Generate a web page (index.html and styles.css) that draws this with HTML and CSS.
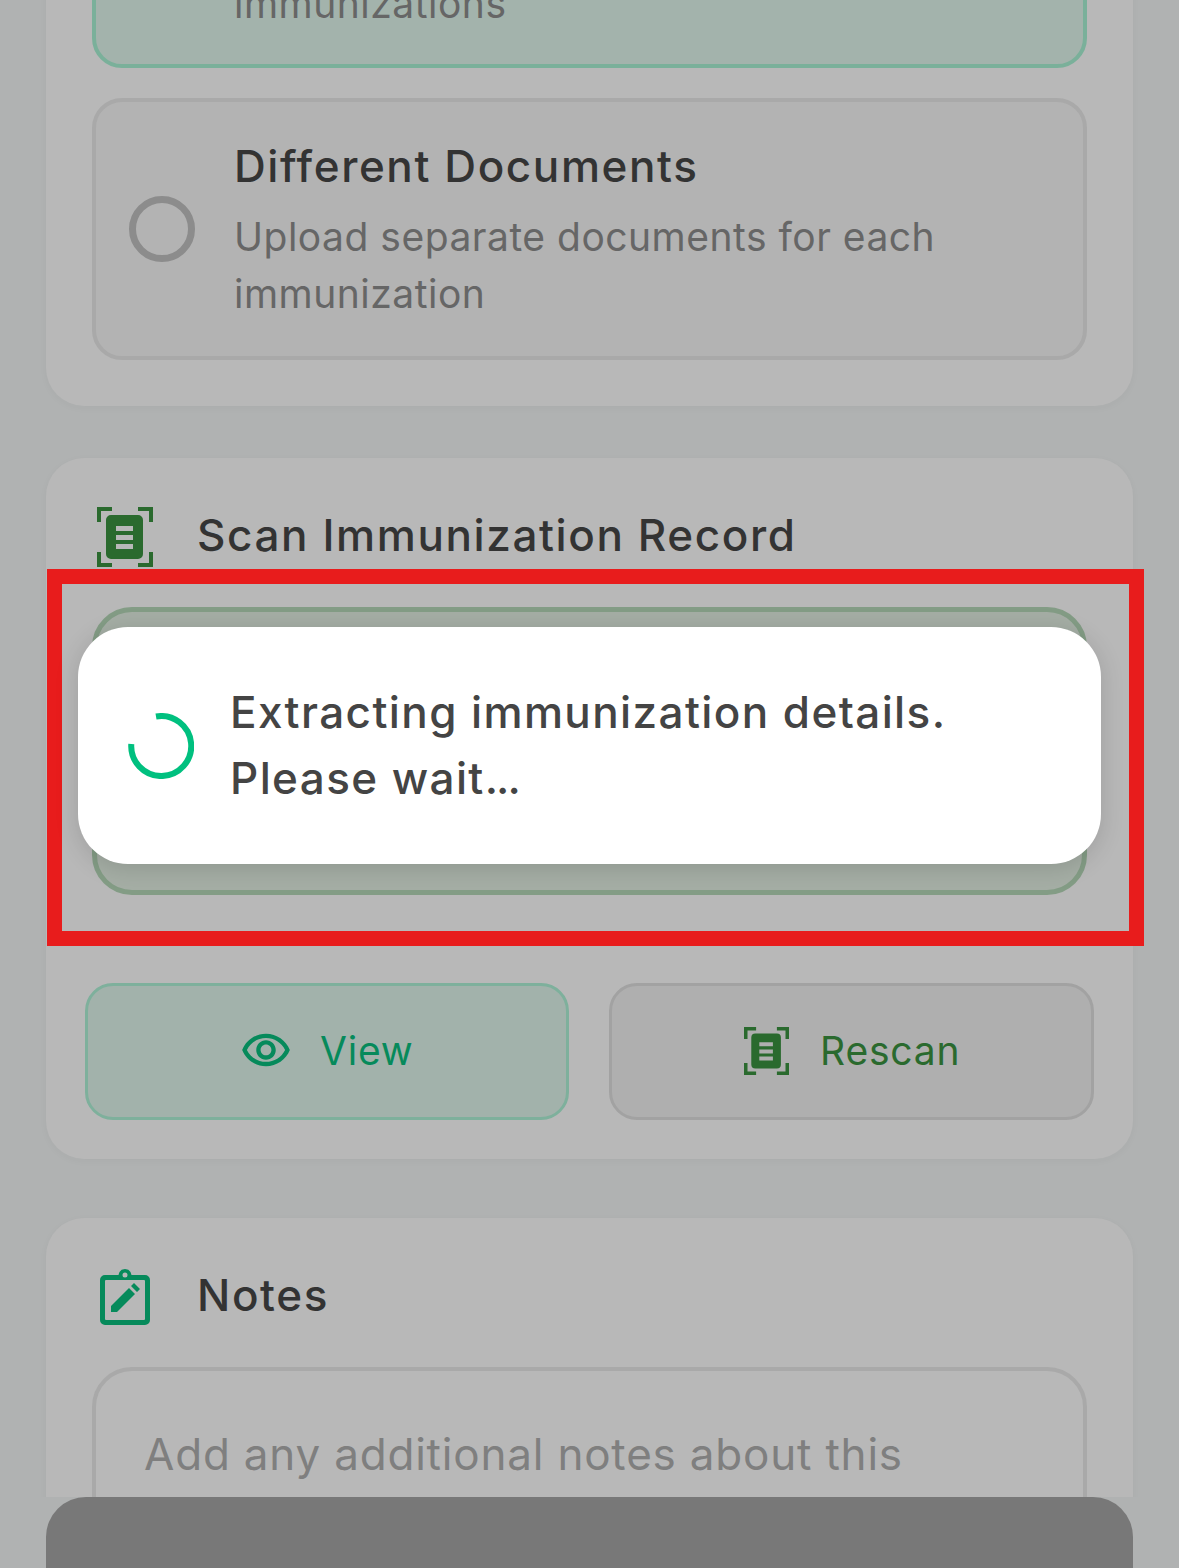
FILE: index.html
```html
<!DOCTYPE html>

<html lang="en">
<head>
    <meta charset="UTF-8">
    <meta name="viewport" content="width=device-width, initial-scale=1.0">
    <title>Scan Immunization Record</title>
    <link rel="stylesheet" href="styles.css">
</head>
<body>
    <div class="screen">
        <div class="scroller">
            <div class="scroll-content">
                <div class="card card-type">
                    <div class="option option-selected">
                        <div class="option-text">
                            <div class="option-desc">immunizations</div>
                        </div>
                    </div>
                    <div class="option">
                        <div class="radio"></div>
                        <div class="option-text">
                            <div class="option-title">Different Documents</div>
                            <div class="option-desc">Upload separate documents for each immunization</div>
                        </div>
                    </div>
                </div>

                <div class="card card-scan">
                    <div class="card-header">
                        <svg class="icon-scan" width="56" height="60" viewBox="0 0 56 60">
                            <path d="M15 2H2v13M41 2h13v13M15 58H2V45M41 58h13V45" fill="none" stroke="#2a6a2e" stroke-width="4"/>
                            <path fill-rule="evenodd" fill="#2a6a2e" d="M14 8h27a5 5 0 0 1 5 5v34a5 5 0 0 1-5 5H14a5 5 0 0 1-5-5V13a5 5 0 0 1 5-5zM19 19v5h17v-5zM19 28v5h17v-5zM19 37v5h17v-5z"/>
                        </svg>
                        <h2 class="card-title">Scan Immunization Record</h2>
                    </div>
                    <div class="scan-box"></div>
                    <div class="button-row">
                        <button class="action-button view-button">
                            <svg width="52" height="52" viewBox="0 0 24 24">
                                <path fill="#068a5b" d="M12 6c3.79 0 7.17 2.13 8.82 5.5C19.17 14.87 15.79 17 12 17s-7.17-2.13-8.82-5.5C4.83 8.13 8.21 6 12 6m0-2C7 4 2.73 7.11 1 11.5 2.73 15.89 7 19 12 19s9.27-3.11 11-7.5C21.27 7.11 17 4 12 4zm0 5c1.38 0 2.5 1.12 2.5 2.5S13.38 14 12 14s-2.5-1.12-2.5-2.5S10.62 9 12 9m0-2c-2.48 0-4.5 2.02-4.5 4.5S9.52 16 12 16s4.5-2.02 4.5-4.5S14.48 7 12 7z"/>
                            </svg>
                            View
                        </button>
                        <button class="action-button rescan-button">
                            <svg width="45" height="48" viewBox="0 0 56 60">
                                <path d="M15 2H2v13M41 2h13v13M15 58H2V45M41 58h13V45" fill="none" stroke="#2a6a2e" stroke-width="4.5"/>
                                <path fill-rule="evenodd" fill="#2a6a2e" d="M14 8h27a5 5 0 0 1 5 5v34a5 5 0 0 1-5 5H14a5 5 0 0 1-5-5V13a5 5 0 0 1 5-5zM19 19v5h17v-5zM19 28v5h17v-5zM19 37v5h17v-5z"/>
                            </svg>
                            Rescan
                        </button>
                    </div>
                </div>

                <div class="card card-notes">
                    <div class="card-header">
                        <svg class="icon-notes" width="50" height="56" viewBox="0 0 50 56">
                            <path fill-rule="evenodd" fill="#068a5b" d="M25 0a7 7 0 0 1 6.500 6H45a5 5 0 0 1 5 5v40a5 5 0 0 1-5 5H5a5 5 0 0 1-5-5V11a5 5 0 0 1 5-5h13.500A7 7 0 0 1 25 0zM25 3.500a2.500 2.500 0 1 0 0 5 2.500 2.500 0 0 0 0-5zM6 11a1 1 0 0 0-1 1v38a1 1 0 0 0 1 1h38a1 1 0 0 0 1-1V12a1 1 0 0 0-1-1z"/>
                            <path fill="#068a5b" d="M11 37 29 19l6 6-18 18h-6zM31 17l3-3 6 6-3 3z"/>
                        </svg>
                        <h2 class="card-title">Notes</h2>
                    </div>
                    <div class="notes-box">Add any additional notes about this</div>
                </div>
            </div>
        </div>
        <div class="bottom-bar"></div>

        <div class="highlight"></div>
        <div class="toast">
            <svg class="spinner" width="66" height="66" viewBox="0 0 66 66">
                <path d="M28 3.500A30 30 0 1 1 3.300 31" fill="none" stroke="#00c07f" stroke-width="6"/>
            </svg>
            <div class="toast-text">Extracting immunization details.<br>Please wait<span class="dots">...</span></div>
        </div>
    </div>
</body>
</html>
```

FILE: styles.css
```css
body {
    font-family: Inter, Lato, sans-serif;
    margin: 0;
    padding: 0;
}
.screen {
    position: relative;
    display: flex;
    flex-direction: column;
    height: 1568px;
    overflow: hidden;
    background-color: #b0b2b2;
}
.scroller {
    flex: 1;
    overflow: hidden;
}
.scroll-content {
    margin-top: -100px;
    padding: 0 46px;
    display: flex;
    flex-direction: column;
}
.card {
    background-color: #b8b8b8;
    border-radius: 38px;
    padding: 0 46px;
    box-shadow: 0 2px 8px rgba(0,0,0,0.03);
}
.card-type {
    padding-bottom: 46px;
}
.card-scan {
    margin-top: 52px;
    padding-top: 49px;
    padding-bottom: 40px;
    height: 701px;
    box-sizing: border-box;
}
.card-notes {
    margin-top: 59px;
    padding-top: 50px;
    height: 420px;
    box-sizing: border-box;
}
.option {
    display: flex;
    align-items: center;
    box-sizing: border-box;
    height: 262px;
    padding: 0 36px 0 33px;
    border: 4px solid #a9a9a9;
    border-radius: 30px;
    background-color: #b3b3b3;
}
.option-selected {
    height: 168px;
    margin-bottom: 30px;
    padding-left: 138px;
    padding-top: 38px;
    background-color: #a3b3ac;
    border-color: #7ab09a;
}
.option-text {
    padding-top: 1px;
}
.radio {
    flex: none;
    box-sizing: border-box;
    width: 66px;
    height: 66px;
    border: 7px solid #8c8c8c;
    border-radius: 50%;
    margin-right: 39px;
}
.option-title {
    font-size: 44px;
    font-weight: 500;
    letter-spacing: 1.6px;
    color: #333333;
    line-height: 56px;
    margin-bottom: 14px;
}
.option-desc {
    font-size: 39px;
    letter-spacing: 0.5px;
    color: #666666;
    line-height: 57px;
}
.card-header {
    display: flex;
    align-items: center;
}
.icon-scan {
    margin-left: 5px;
    margin-right: 44px;
}
.icon-notes {
    margin-left: 8px;
    margin-right: 47px;
}
.card-title {
    margin: 0 0 4px;
    font-size: 44px;
    font-weight: 500;
    letter-spacing: 1.6px;
    color: #333333;
}
.scan-box {
    box-sizing: border-box;
    height: 288px;
    margin-top: 40px;
    border: 5px solid #839c85;
    border-radius: 40px;
    background-color: #a5aea5;
}
.button-row {
    display: flex;
    gap: 40px;
    margin: 88px -7px 0;
}
.action-button {
    flex: 1;
    display: flex;
    align-items: center;
    justify-content: center;
    gap: 28px;
    height: 137px;
    padding: 0 0 2px;
    font-family: inherit;
    font-size: 39px;
    letter-spacing: 0.8px;
    border-radius: 28px;
    border: 3px solid;
}
.view-button {
    background-color: #a2b2ab;
    border-color: #7eb09c;
    color: #068a5b;
}
.rescan-button {
    gap: 31px;
    padding-left: 2px;
    background-color: #afafaf;
    border-color: #a2a2a2;
    color: #2a6a2e;
}
.notes-box {
    margin-top: 41px;
    height: 200px;
    box-sizing: border-box;
    padding: 55px 48px;
    border: 4px solid #a9a9a9;
    border-radius: 40px;
    font-size: 44px;
    letter-spacing: 0.8px;
    line-height: 56px;
    color: #7f7f7f;
}
.bottom-bar {
    flex: none;
    height: 71px;
    margin: 0 46px;
    border-radius: 40px 40px 0 0;
    background-color: #787878;
}
.highlight {
    position: absolute;
    left: 47px;
    top: 569px;
    width: 1097px;
    height: 377px;
    box-sizing: border-box;
    border: 15px solid #e81c1c;
}
.toast {
    position: absolute;
    left: 78px;
    top: 627px;
    width: 1023px;
    height: 237px;
    box-sizing: border-box;
    display: flex;
    align-items: center;
    padding-left: 50px;
    border-radius: 50px;
    background-color: #ffffff;
    box-shadow: 0 4px 24px rgba(0,0,0,0.14);
}
.spinner {
    flex: none;
    margin-right: 36px;
}
.toast-text {
    font-size: 44px;
    font-weight: 500;
    letter-spacing: 1.4px;
    line-height: 66px;
    color: #444444;
    margin-bottom: 2px;
}
.dots {
    letter-spacing: -2px;
}
```
